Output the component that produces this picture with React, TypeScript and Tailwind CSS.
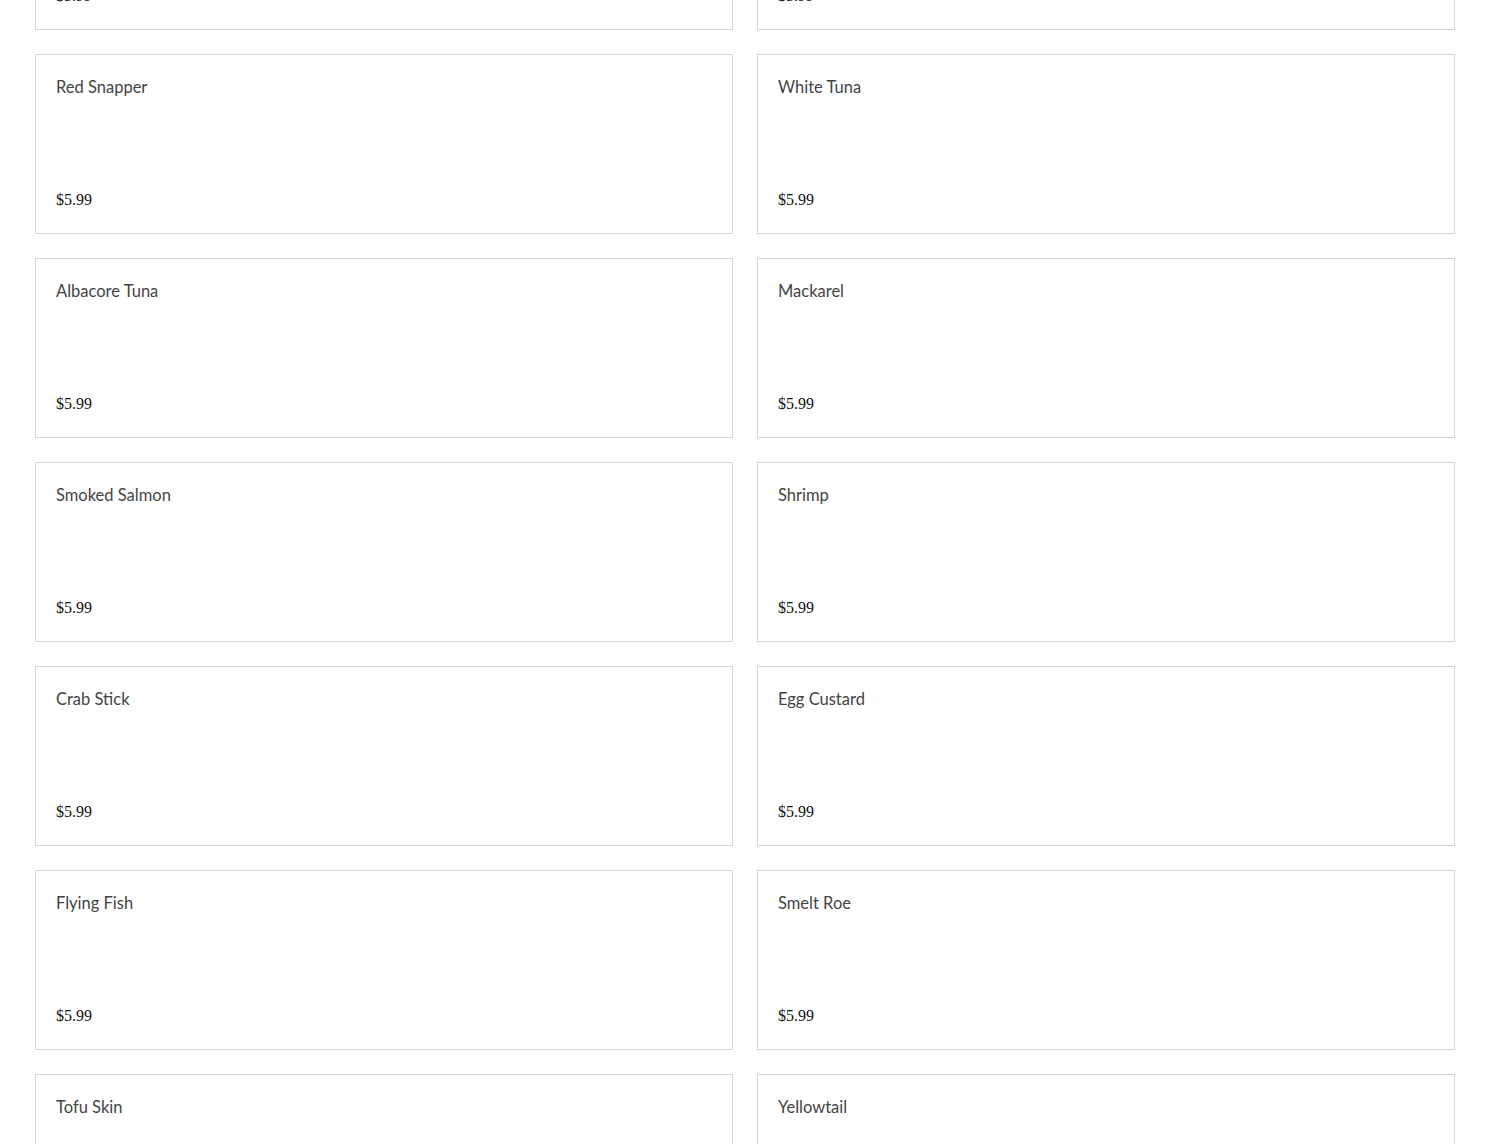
const items = [
  { name: "Salmon", price: "$5.99" },
  { name: "Tuna", price: "$5.99" },
  { name: "Red Snapper", price: "$5.99" },
  { name: "White Tuna", price: "$5.99" },
  { name: "Albacore Tuna", price: "$5.99" },
  { name: "Mackarel", price: "$5.99" },
  { name: "Smoked Salmon", price: "$5.99" },
  { name: "Shrimp", price: "$5.99" },
  { name: "Crab Stick", price: "$5.99" },
  { name: "Egg Custard", price: "$5.99" },
  { name: "Flying Fish", price: "$5.99" },
  { name: "Smelt Roe", price: "$5.99" },
  { name: "Tofu Skin", price: "$5.99" },
  { name: "Yellowtail", price: "$5.99" },
];

export default function App() {
  return (
    <div className="h-[1144px] overflow-hidden bg-white">
      <div className="-mt-[150px] grid grid-cols-2 gap-6 px-[35px]">
        {items.map((item) => (
          <div
            key={item.name}
            className="flex h-[180px] flex-col justify-between border border-[#d4d4d4] px-5 pt-5 pb-[22px]"
          >
            <div className="font-['Lato',sans-serif] text-[16.5px] leading-6 text-[#444]">
              {item.name}
            </div>
            <div className="font-['Liberation_Serif',serif] text-base font-normal leading-[22px] text-[#111]">
              {item.price}
            </div>
          </div>
        ))}
      </div>
    </div>
  );
}
